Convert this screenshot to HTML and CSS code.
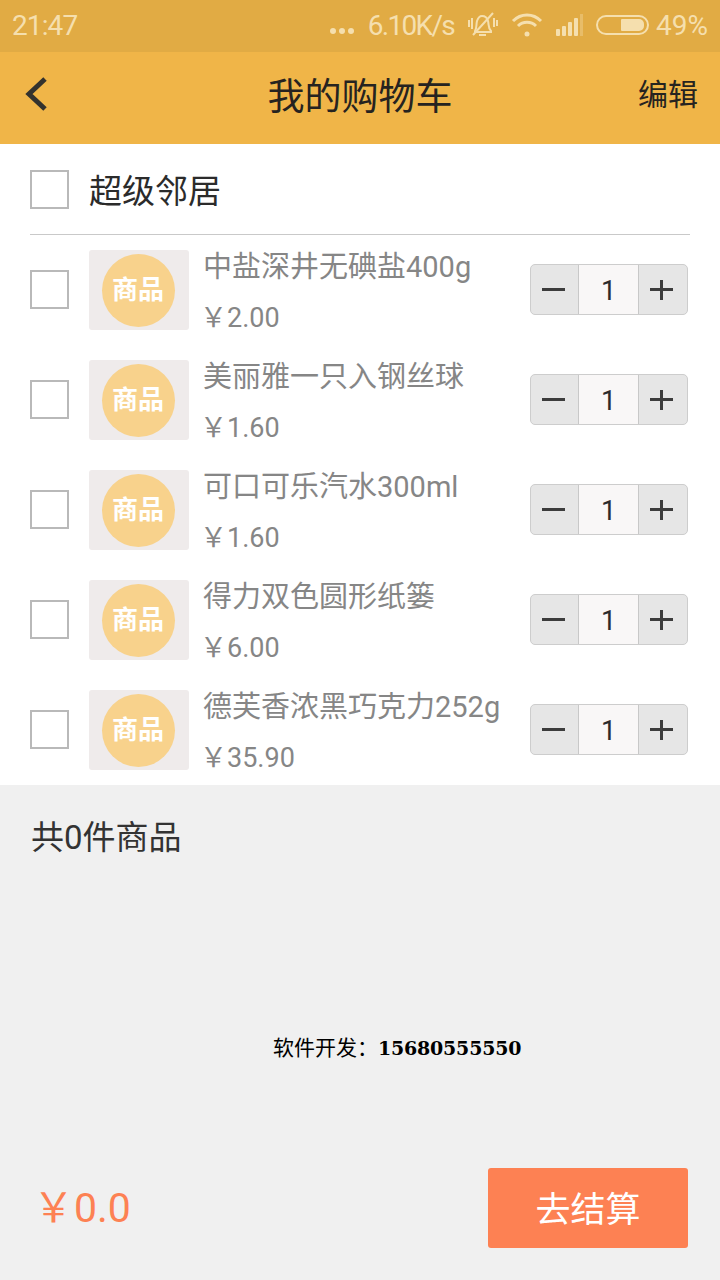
FILE: index.html
```html
<!DOCTYPE html>
<html lang="zh-CN">
<head>
<meta charset="utf-8">
<title>我的购物车</title>
<link rel="stylesheet" href="styles.css">
</head>
<body>
<div class="app">
  <div class="status">
    <span class="time">21:47</span>
    <div class="status-right">
      <span class="dots"><i></i><i></i><i></i></span>
      <span class="speed">6.10K/s</span>
      <svg class="ic-bell" width="32" height="28" viewBox="0 0 32 28" fill="none" stroke="#f5dfae" stroke-width="2"><path d="M9 20c2-3 1-6 2-10 1-3 3-5 5-5s5 1 6 5c1 4 0 7 3 10v1H9z"/><path d="M13 24h7"/><path d="M7 24L27 2"/><path d="M3 9v7M6 7v11M28 7v9M31 9v6"/></svg>
      <svg class="ic-wifi" width="32" height="26" viewBox="0 0 32 26" fill="none" stroke="#f5dfae" stroke-width="3"><path d="M2 9c8-8 20-8 28 0"/><path d="M7 14c5-5 13-5 18 0"/><circle cx="16" cy="22" r="2.5" fill="#f5dfae" stroke="none"/></svg>
      <svg class="ic-signal" width="28" height="22" viewBox="0 0 28 22" fill="#f5dfae"><rect x="0" y="15" width="4" height="7" rx="1"/><rect x="6" y="12" width="4" height="10" rx="1"/><rect x="12" y="8" width="4" height="14" rx="1"/><rect x="18" y="4" width="4" height="18" rx="1"/><rect x="24" y="0" width="3" height="22" opacity=".35"/></svg>
      <span class="battery"><span class="battery-fill"></span></span>
      <span class="pct">49%</span>
    </div>
  </div>
  <header class="bar">
    <svg class="back" width="26" height="36" viewBox="0 0 26 36" fill="none" stroke="#33322e" stroke-width="5"><path d="M22 3L6 18l16 15"/></svg>
    <h1 class="title">我的购物车</h1>
    <span class="edit">编辑</span>
  </header>
  <section class="list">
    <div class="shop">
      <span class="check"></span>
      <span class="shop-name">超级邻居</span>
    </div>
    <div class="item">
      <span class="check"></span>
      <div class="thumb"><span class="badge">商品</span></div>
      <div class="info"><p class="name">中盐深井无碘盐400g</p><p class="price">￥2.00</p></div>
      <div class="stepper"><span class="step step-dec"><i class="minus"></i></span><span class="qty">1</span><span class="step"><i class="minus"></i><i class="vert"></i></span></div>
    </div>
    <div class="item">
      <span class="check"></span>
      <div class="thumb"><span class="badge">商品</span></div>
      <div class="info"><p class="name">美丽雅一只入钢丝球</p><p class="price">￥1.60</p></div>
      <div class="stepper"><span class="step step-dec"><i class="minus"></i></span><span class="qty">1</span><span class="step"><i class="minus"></i><i class="vert"></i></span></div>
    </div>
    <div class="item">
      <span class="check"></span>
      <div class="thumb"><span class="badge">商品</span></div>
      <div class="info"><p class="name">可口可乐汽水300ml</p><p class="price">￥1.60</p></div>
      <div class="stepper"><span class="step step-dec"><i class="minus"></i></span><span class="qty">1</span><span class="step"><i class="minus"></i><i class="vert"></i></span></div>
    </div>
    <div class="item">
      <span class="check"></span>
      <div class="thumb"><span class="badge">商品</span></div>
      <div class="info"><p class="name">得力双色圆形纸篓</p><p class="price">￥6.00</p></div>
      <div class="stepper"><span class="step step-dec"><i class="minus"></i></span><span class="qty">1</span><span class="step"><i class="minus"></i><i class="vert"></i></span></div>
    </div>
    <div class="item">
      <span class="check"></span>
      <div class="thumb"><span class="badge">商品</span></div>
      <div class="info"><p class="name">德芙香浓黑巧克力252g</p><p class="price">￥35.90</p></div>
      <div class="stepper"><span class="step step-dec"><i class="minus"></i></span><span class="qty">1</span><span class="step"><i class="minus"></i><i class="vert"></i></span></div>
    </div>
  </section>
  <section class="summary">
    <p class="count">共0件商品</p>
    <p class="dev">软件开发：<b>15680555550</b></p>
    <div class="total">
      <span class="sum">￥0.0</span>
      <button class="pay">去结算</button>
    </div>
  </section>
</div>
</body>
</html>
```

FILE: styles.css
```css
* { box-sizing: border-box; }
html, body { margin: 0; padding: 0; }
body { font-family: Roboto, "Noto Sans CJK SC", sans-serif; background: #f0f0f0; }
p, h1 { margin: 0; font-weight: 400; }
.app { width: 720px; height: 1280px; display: flex; flex-direction: column; overflow: hidden; }

.status { height: 52px; background: #e1ab44; display: flex; align-items: center; justify-content: space-between; padding: 0 12px 2px; color: #f5dfae; font-size: 28px; }
.time { letter-spacing: -0.9px; }
.status-right { display: flex; align-items: center; }
.dots { display: flex; gap: 3px; margin-top: 12px; margin-right: 14px; }
.dots i { width: 6px; height: 6px; border-radius: 50%; background: #f5dfae; }
.speed { letter-spacing: -1.7px; }
.ic-bell { margin-left: 12px; }
.ic-wifi { margin-left: 13px; }
.ic-signal { margin-left: 13px; }
.battery { width: 53px; height: 20px; margin-left: 12px; border: 2px solid #f5dfae; border-radius: 10px; display: flex; justify-content: flex-end; padding: 2px 3px; }
.battery-fill { width: 23px; background: #f5dfae; border-radius: 1px 5px 5px 1px; }
.pct { margin-left: 7px; }

.bar { height: 92px; background: #f0b548; display: flex; align-items: center; justify-content: space-between; padding: 0 22px 8px 23px; position: relative; color: #262320; }
.title { position: absolute; left: 0; right: 0; text-align: center; font-size: 37px; line-height: 92px; top: 0; }
.edit { font-size: 30px; line-height: 1; margin-bottom: -2px; }

.list { background: #fff; height: 641px; padding: 0 30px; }
.shop { height: 91px; border-bottom: 1px solid #c9c9c9; display: flex; align-items: center; }
.shop-name { font-size: 33px; color: #2b2b2b; margin-left: 20px; }
.check { width: 39px; height: 39px; border: 2px solid #b9b9b9; background: #fff; flex: none; }
.item { height: 110px; display: flex; align-items: center; padding-bottom: 2px; }
.thumb { width: 100px; height: 80px; margin-left: 20px; margin-bottom: -2px; padding-right: 2px; background: #efebeb; border-radius: 3px; display: flex; align-items: center; justify-content: center; flex: none; }
.badge { width: 73px; height: 73px; border-radius: 50%; background: #f8d28c; color: #fff; font-size: 26px; font-weight: 700; line-height: 72px; text-align: center; }
.info { margin-left: 15px; flex: 1; color: #868686; margin-bottom: -6px; white-space: nowrap; }
.name { font-size: 29px; line-height: 36px; margin-left: -1px; }
.price { font-size: 27px; line-height: 34px; margin-top: 16px; margin-left: -4px; }
.stepper { width: 158px; height: 51px; margin-right: 2px; display: flex; border: 1.5px solid #cdcdcd; border-radius: 5px; overflow: hidden; background: #e6e6e6; }
.step { flex: 1; position: relative; }
.step-dec { flex: none; width: 47px; }
.step i { position: absolute; background: #3c3c3c; }
.minus { left: 11px; width: 23px; top: 23px; height: 3px; }
.vert { left: 21px; width: 3px; top: 15px; height: 20px; }
.qty { width: 61px; flex: none; background: #f9f7f7; border-left: 1.5px solid #c8c8c8; border-right: 1.5px solid #c8c8c8; text-align: center; color: #2b2b2b; font-size: 27px; line-height: 52px; }

.summary { flex: 1; padding: 0 32px; display: flex; flex-direction: column; }
.count { font-size: 33px; color: #333; line-height: 42px; margin-top: 32px; margin-left: -1px; }
.dev { font-family: "DejaVu Serif", "Noto Sans CJK SC", serif; font-size: 21px; color: #000; margin-top: 176px; margin-left: 241px; line-height: 26px; white-space: nowrap; }
.dev b { font-size: 19px; letter-spacing: -0.2px; }
.total { display: flex; align-items: center; justify-content: space-between; margin-top: auto; margin-bottom: 32px; }
.sum { font-size: 41px; color: #fd8153; margin-bottom: 8px; margin-left: 1px; }
.pay { width: 200px; height: 80px; padding: 0 0 3px; background: #fd8153; color: #fff; border: 0; border-radius: 3px; font-family: inherit; font-size: 35px; }
```
